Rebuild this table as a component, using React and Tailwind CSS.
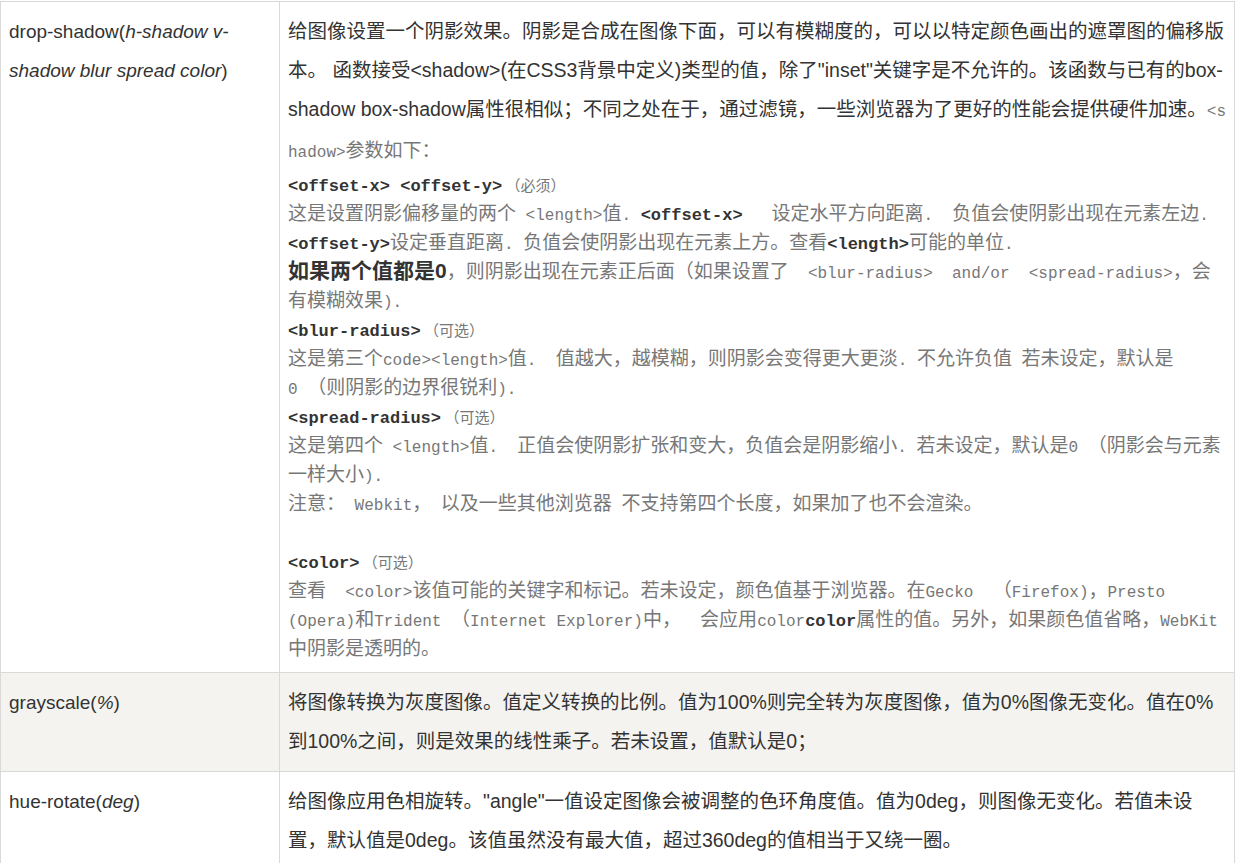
import React from "react";

const CJK = /([\u2E80-\u9FFF\u3000-\u303F\uFF00-\uFFEF]+)/;
const isCJK = (s) => /^[\u2E80-\u9FFF\u3000-\u303F\uFF00-\uFFEF]+$/.test(s);

function Mix({ t, bold = false }) {
  const parts = t.split(CJK);
  return parts.map((p, i) => {
    if (p === "") return null;
    if (isCJK(p)) {
      return (
        <span key={i} className={bold ? "font-bold text-[#333] leading-none" : "leading-none"}>
          {p}
        </span>
      );
    }
    return (
      <span
        key={i}
        className={
          bold
            ? "font-['Liberation_Mono','Noto_Sans_CJK_SC',monospace] text-[17px] leading-none font-bold text-[#333]"
            : "font-['Liberation_Mono','Noto_Sans_CJK_SC',monospace] text-[16px] leading-none"
        }
      >
        {p}
      </span>
    );
  });
}

function Small({ t }) {
  return <span className="text-[15px] leading-none">{t}</span>;
}

function SLine({ children }) {
  return <div className="whitespace-pre leading-[29px] h-[29px] overflow-visible">{children}</div>;
}

function PLine({ children, className = "" }) {
  return <div className={"whitespace-pre h-[39px] leading-[39px] " + className}>{children}</div>;
}

export default function App() {
  return (
    <div className="bg-white min-h-screen">
      <div className="mt-px w-[1235px] border-t border-l border-r border-[#d9d9d9] text-[#333] font-['Liberation_Sans','Noto_Sans_CJK_SC',sans-serif] text-[19.5px] leading-[39px]">
        {/* Row 1 */}
        <div className="flex border-b border-[#d9d9d9]">
          <div className="w-[279px] shrink-0 border-r border-[#d9d9d9] px-2 pt-[10px] pb-[11px] text-[19px]">
            <div className="whitespace-nowrap h-[39px]">
              drop-shadow(<i>h-shadow v-</i>
            </div>
            <div className="whitespace-nowrap h-[39px]">
              <i>shadow blur spread color</i>)
            </div>
          </div>
          <div className="flex-1 px-2 pt-[10px] pb-[11px]">
            <PLine>给图像设置一个阴影效果。阴影是合成在图像下面，可以有模糊度的，可以以特定颜色画出的遮罩图的偏移版</PLine>
            <PLine>本。 函数接受&lt;shadow&gt;(在CSS3背景中定义)类型的值，除了"inset"关键字是不允许的。该函数与已有的box-</PLine>
            <PLine>
              shadow box-shadow属性很相似；不同之处在于，通过滤镜，一些浏览器为了更好的性能会提供硬件加速。
              <span className="font-['Noto_Sans_CJK_SC',sans-serif] text-[#777] leading-none">
                <Mix t="<s" />
              </span>
            </PLine>
            <PLine className="font-['Noto_Sans_CJK_SC',sans-serif] text-[#777] text-[19px]">
              <Mix t="hadow>参数如下：" />
            </PLine>

            <div className="font-['Noto_Sans_CJK_SC',sans-serif] text-[#777] text-[19px]">
              <SLine>
                <Mix t="<offset-x> <offset-y>" bold />
                <Small t=" （必须）" />
              </SLine>
              <SLine>
                <Mix t="这是设置阴影偏移量的两个 <length>值. " />
                <Mix t="<offset-x>" bold />
                <Mix t="   设定水平方向距离.  负值会使阴影出现在元素左边." />
              </SLine>
              <SLine>
                <Mix t="<offset-y>" bold />
                <Mix t="设定垂直距离. 负值会使阴影出现在元素上方。查看" />
                <Mix t="<length>" bold />
                <Mix t="可能的单位." />
              </SLine>
              <SLine>
                <span className="font-['Liberation_Sans','Noto_Sans_CJK_SC',sans-serif] text-[21px] leading-none font-bold text-[#333]">
                  如果两个值都是0
                </span>
                <Mix t="，则阴影出现在元素正后面（如果设置了  <blur-radius>  and/or  <spread-radius>，会" />
              </SLine>
              <SLine>
                <Mix t="有模糊效果)." />
              </SLine>
              <SLine>
                <Mix t="<blur-radius>" bold />
                <Small t=" （可选）" />
              </SLine>
              <SLine>
                <Mix t="这是第三个code><length>值.  值越大，越模糊，则阴影会变得更大更淡. 不允许负值 若未设定，默认是" />
              </SLine>
              <SLine>
                <Mix t="0 （则阴影的边界很锐利)." />
              </SLine>
              <SLine>
                <Mix t="<spread-radius>" bold />
                <Small t=" （可选）" />
              </SLine>
              <SLine>
                <Mix t="这是第四个 <length>值.  正值会使阴影扩张和变大，负值会是阴影缩小. 若未设定，默认是0 （阴影会与元素" />
              </SLine>
              <SLine>
                <Mix t="一样大小)." />
              </SLine>
              <SLine>
                <Mix t="注意： Webkit， 以及一些其他浏览器 不支持第四个长度，如果加了也不会渲染。" />
              </SLine>
              <SLine>{" "}</SLine>
              <SLine>
                <Mix t="<color>" bold />
                <Small t=" （可选）" />
              </SLine>
              <SLine>
                <Mix t="查看  <color>该值可能的关键字和标记。若未设定，颜色值基于浏览器。在Gecko  （Firefox)，Presto" />
              </SLine>
              <SLine>
                <Mix t="(Opera)和Trident （Internet Explorer)中，  会应用color" />
                <Mix t="color" bold />
                <Mix t="属性的值。另外，如果颜色值省略，WebKit" />
              </SLine>
              <SLine>
                <Mix t="中阴影是透明的。" />
              </SLine>
            </div>
          </div>
        </div>

        {/* Row 2 */}
        <div className="flex border-b border-[#d9d9d9] bg-[#f4f3f0]">
          <div className="w-[279px] shrink-0 border-r border-[#d9d9d9] px-2 py-[10px] text-[19px]">
            <div className="whitespace-nowrap h-[39px]">
              grayscale(<i>%</i>)
            </div>
          </div>
          <div className="flex-1 px-2 py-[10px]">
            <PLine>将图像转换为灰度图像。值定义转换的比例。值为100%则完全转为灰度图像，值为0%图像无变化。值在0%</PLine>
            <PLine>到100%之间，则是效果的线性乘子。若未设置，值默认是0；</PLine>
          </div>
        </div>

        {/* Row 3 */}
        <div className="flex">
          <div className="w-[279px] shrink-0 border-r border-[#d9d9d9] px-2 py-[10px] text-[19px]">
            <div className="whitespace-nowrap h-[39px]">
              hue-rotate(<i>deg</i>)
            </div>
          </div>
          <div className="flex-1 px-2 py-[10px]">
            <PLine>给图像应用色相旋转。"angle"一值设定图像会被调整的色环角度值。值为0deg，则图像无变化。若值未设</PLine>
            <PLine>置，默认值是0deg。该值虽然没有最大值，超过360deg的值相当于又绕一圈。</PLine>
          </div>
        </div>
      </div>
    </div>
  );
}
